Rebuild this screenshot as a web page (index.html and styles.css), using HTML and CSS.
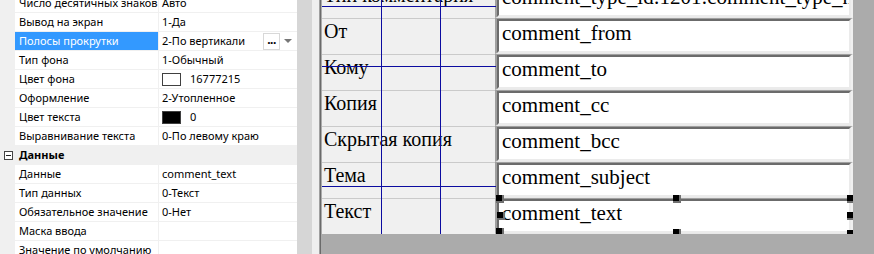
FILE: index.html
```html
<!DOCTYPE html>
<html lang="ru">
<head>
<meta charset="utf-8">
<title>Designer</title>
<link rel="stylesheet" href="styles.css">
</head>
<body>
<div class="app">
  <div class="props">
    <div class="plist">
      <div class="prow"><div class="gut"></div><div class="pname">Число десятичных знаков</div><div class="pval">Авто</div></div>
      <div class="prow"><div class="gut"></div><div class="pname">Вывод на экран</div><div class="pval">1-Да</div></div>
      <div class="prow sel"><div class="gut"></div><div class="pname">Полосы прокрутки</div><div class="pval"><span class="vtext">2-По вертикали</span><span class="dots">...</span><span class="arrow"></span></div></div>
      <div class="prow"><div class="gut"></div><div class="pname">Тип фона</div><div class="pval">1-Обычный</div></div>
      <div class="prow"><div class="gut"></div><div class="pname">Цвет фона</div><div class="pval"><span class="swatch white"></span>16777215</div></div>
      <div class="prow"><div class="gut"></div><div class="pname">Оформление</div><div class="pval">2-Утопленное</div></div>
      <div class="prow"><div class="gut"></div><div class="pname">Цвет текста</div><div class="pval"><span class="swatch black"></span>0</div></div>
      <div class="prow"><div class="gut"></div><div class="pname">Выравнивание текста</div><div class="pval">0-По левому краю</div></div>
      <div class="prow section"><div class="gut"><span class="minus"></span></div><div class="pname">Данные</div><div class="pval"></div></div>
      <div class="prow"><div class="gut"></div><div class="pname">Данные</div><div class="pval">comment_text</div></div>
      <div class="prow"><div class="gut"></div><div class="pname">Тип данных</div><div class="pval">0-Текст</div></div>
      <div class="prow"><div class="gut"></div><div class="pname">Обязательное значение</div><div class="pval">0-Нет</div></div>
      <div class="prow"><div class="gut"></div><div class="pname">Маска ввода</div><div class="pval"></div></div>
      <div class="prow"><div class="gut"></div><div class="pname">Значение по умолчанию</div><div class="pval"></div></div>
    </div>
  </div>
  <div class="splitter"></div>
  <div class="frame"></div>
  <div class="canvas">
    <div class="form">
      <div class="frows">
        <div class="frow"><div class="flabel">Тип комментария</div><div class="field"><div class="fin">comment_type_id:1201:comment_type_name</div></div></div>
        <div class="frow"><div class="flabel">От</div><div class="field"><div class="fin">comment_from</div></div></div>
        <div class="frow"><div class="flabel">Кому</div><div class="field"><div class="fin">comment_to</div></div></div>
        <div class="frow"><div class="flabel">Копия</div><div class="field"><div class="fin">comment_cc</div></div></div>
        <div class="frow"><div class="flabel">Скрытая копия</div><div class="field"><div class="fin">comment_bcc</div></div></div>
        <div class="frow"><div class="flabel">Тема</div><div class="field"><div class="fin">comment_subject</div></div></div>
        <div class="frow"><div class="flabel">Текст</div><div class="field selected"><div class="fin">comment_text</div>
          <span class="h h-tl"></span><span class="h h-tm"></span><span class="h h-tr"></span>
          <span class="h h-ml"></span><span class="h h-mr"></span>
          <span class="h h-bl"></span><span class="h h-bm"></span><span class="h h-br"></span>
        </div></div>
      </div>
      <div class="guide gv g1"></div>
      <div class="guide gv g2"></div>
      <div class="guide gh g3"></div>
      <div class="guide gh g4"></div>
      <div class="guide gh g5"></div>
    </div>
  </div>
</div>
</body>
</html>
```
FILE: styles.css
```css
* { box-sizing: border-box; }
html, body { margin: 0; padding: 0; }
body { width: 874px; height: 254px; overflow: hidden; background: #ababab; }
.app { display: flex; width: 874px; height: 254px; overflow: hidden; }

/* property grid */
.props {
  width: 297px; height: 254px; overflow: hidden; background: #fff; flex: none;
  font-family: "Noto Sans", "Open Sans", sans-serif; font-size: 11px; color: #000;
}
.plist { margin-top: -6px; }
.prow { display: grid; grid-template-columns: 15px 144px 1fr; height: 19px; }
.gut { background: #f0f0f0; position: relative; }
.pname {
  padding-left: 4px; line-height: 18px; height: 19px; white-space: nowrap; overflow: hidden;
  border-bottom: 1px solid #f0f0f0; border-right: 1px solid #f0f0f0;
}
.pval {
  padding-left: 3px; line-height: 18px; height: 19px; white-space: nowrap; overflow: hidden;
  border-bottom: 1px solid #f0f0f0; display: flex; align-items: center;
}
.sel .pname { background: #3399ff; color: #fff; }
.vtext { flex: none; width: 101px; }
.dots {
  flex: none; width: 17px; height: 17px; border: 1px solid #d8d8d8; background: #fff;
  font-weight: bold; line-height: 12px; text-align: center; font-size: 12px; letter-spacing: -0.5px;
}
.arrow {
  flex: none; margin-left: 4px; width: 0; height: 0;
  border-left: 4px solid transparent; border-right: 4px solid transparent; border-top: 4px solid #777;
}
.swatch { flex: none; width: 19px; height: 13px; border: 1px solid #404040; margin-right: 9px; }
.swatch.white { background: #fff; }
.swatch.black { background: #000; }
.section .pname, .section .pval { background: #f0f0f0; font-weight: bold; border-color: #f0f0f0; }
.minus {
  position: absolute; left: 4px; top: 5px; width: 9px; height: 9px; border: 1px solid #444; background: #fff;
}
.minus::after { content: ""; position: absolute; left: 1px; top: 3px; width: 5px; height: 1px; background: #222; }

/* splitter and frame */
.splitter { flex: none; width: 15px; background: #d6d6d6; }
.frame { flex: none; width: 7px; background: #efefef; }
.canvas {
  flex: none; width: 555px; height: 254px; background: #ababab;
  border-left: 1px solid #a0a0a0; box-shadow: inset 1px 0 0 #6a6a6a;
  padding-left: 2px;
}
.form {
  position: relative; width: 531px; height: 234px; background: #f0f0f0; overflow: hidden;
  font-family: "Liberation Serif", "Times New Roman", serif; color: #000;
}
.frows { margin-top: -18px; }
.frow { display: flex; height: 36px; }
.flabel {
  width: 173px; flex: none; border-top: 1px solid #cacaca; padding: 1px 0 0 2px;
  font-size: 20px; white-space: nowrap; overflow: hidden;
}
.field {
  position: relative; width: 358px; flex: none;
  border-style: solid; border-width: 1px 2px 1px 2px;
  border-color: #a0a0a0 #f0f0f0 #e8e8e8 #a0a0a0;
}
.fin {
  height: 34px; background: #fff;
  border-style: solid; border-width: 2px 2px 2px 2px;
  border-color: #6b6b6b #ebebeb #ebebeb #6b6b6b;
  padding: 0 0 0 3px; font-size: 21px; white-space: nowrap; overflow: hidden;
}
.h {
  position: absolute; width: 8px; height: 8px; background: #000;
  border-right: 2px solid #707070; border-bottom: 2px solid #707070;
}
.h-tl { left: -1px; top: -4px; }
.h-tm { left: 176px; top: -4px; }
.h-tr { right: -4px; top: -4px; }
.h-ml { left: 0px; top: 13px; }
.h-mr { right: -4px; top: 13px; }
.h-bl { left: -1px; bottom: -3px; }
.h-bm { left: 176px; bottom: -4px; }
.h-br { right: -4px; bottom: -5px; }

/* layout guides */
.guide { position: absolute; background: #0c0ca0; }
.gv { top: 0; width: 1px; height: 234px; }
.g1 { left: 59px; }
.g2 { left: 118px; }
.gh { left: 0; height: 1px; width: 174px; }
.g3 { top: 6px; }
.g4 { top: 66px; }
.g5 { top: 186px; }
```
